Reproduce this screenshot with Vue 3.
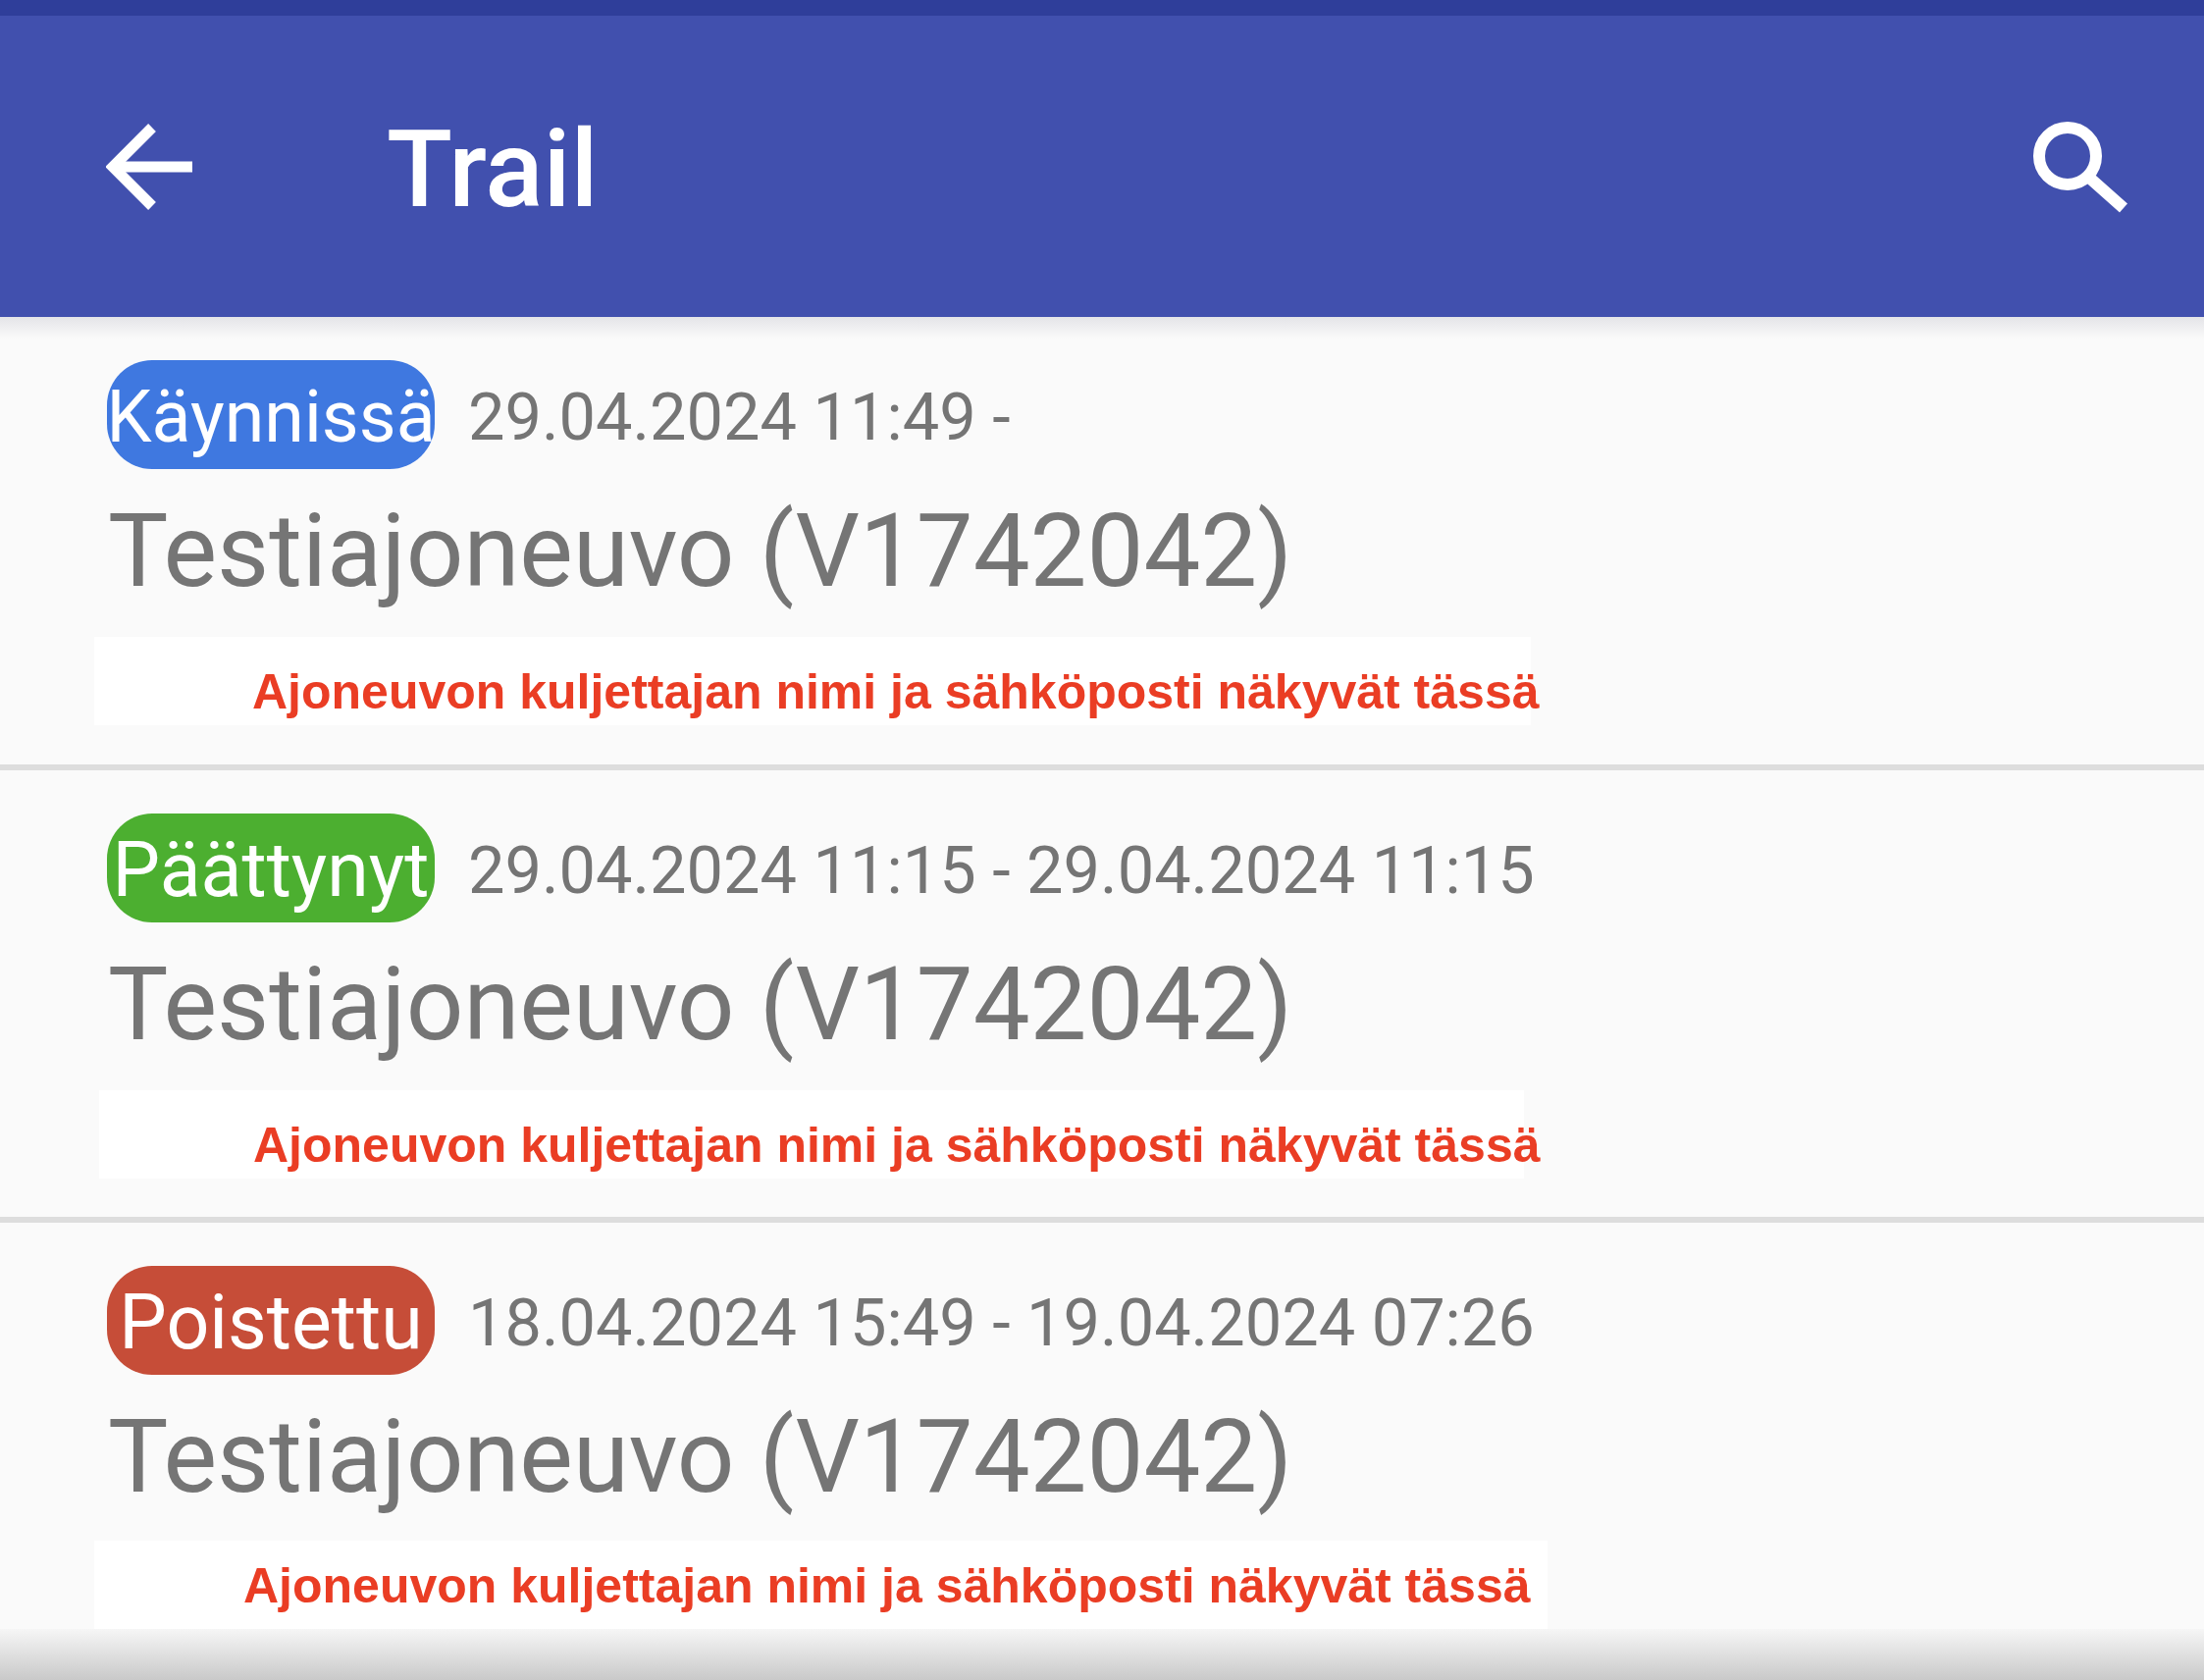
<script setup>
const trips = [
  { id: 1, status: 'Käynnissä', tone: 'running', time: '29.04.2024 11:49 -', patch: 'patch-a' },
  { id: 2, status: 'Päättynyt', tone: 'ended', time: '29.04.2024 11:15 - 29.04.2024 11:15', patch: 'patch-b' },
  { id: 3, status: 'Poistettu', tone: 'removed', time: '18.04.2024 15:49 - 19.04.2024 07:26', patch: 'patch-c' },
]
</script>

<template>
  <div class="page">
    <div class="status-bar"></div>
    <header class="toolbar">
      <svg class="back" width="88" height="88" viewBox="0 0 88 88" fill="none" stroke="#fff" stroke-width="11">
        <path d="M88 44H8" />
        <path d="M47 4 L7 44 L47 84" />
      </svg>
      <h1 class="title">Trail</h1>
      <svg class="search" width="100" height="100" viewBox="0 0 100 100" fill="none" stroke="#fff" stroke-width="12">
        <circle cx="39" cy="40" r="29" />
        <path d="M60 61 L96 93" />
      </svg>
    </header>
    <main class="list">
      <section v-for="trip in trips" :key="trip.id" class="trip">
        <div class="head">
          <span class="badge" :class="trip.tone"><span>{{ trip.status }}</span></span>
          <span class="time">{{ trip.time }}</span>
        </div>
        <div class="vehicle">Testiajoneuvo (V1742042)</div>
        <div class="patch" :class="trip.patch">Ajoneuvon kuljettajan nimi ja sähköposti näkyvät tässä</div>
      </section>
    </main>
    <div class="fade"></div>
  </div>
</template>

<style scoped>
.page {
  width: 2246px;
  height: 1712px;
  display: flex;
  flex-direction: column;
  overflow: hidden;
  background: #fafafa;
  font-family: Roboto, "Liberation Sans", sans-serif;
}

.status-bar {
  height: 16px;
  background: #2f3e9a;
}

.toolbar {
  height: 307px;
  flex: none;
  display: flex;
  align-items: center;
  padding: 0 78px 0 108px;
  box-sizing: border-box;
  background: #4150ae;
}

.back {
  flex: none;
  margin-top: 1px;
}

.title {
  margin: 6px 0 0 198px;
  flex: 1;
  color: #fff;
  font-size: 110px;
  font-weight: 500;
  line-height: 1;
}

.search {
  flex: none;
  margin-top: -2px;
}

.list {
  flex: none;
  background: linear-gradient(#e4e4e8, #fafafa 22px);
}

.trip {
  height: 456px;
  box-sizing: border-box;
  padding-top: 44px;
}

.trip + .trip {
  background: #fafafa;
  border-top: 6px solid #dddddd;
  height: 461px;
}

.trip:last-child {
  height: auto;
}

.head {
  display: flex;
  align-items: center;
  height: 111px;
  padding-left: 109px;
}

.badge {
  width: 334px;
  height: 111px;
  flex: none;
  display: flex;
  align-items: center;
  justify-content: center;
  padding-top: 4px;
  box-sizing: border-box;
  border-radius: 46px;
  color: #fff;
  white-space: nowrap;
}

.running { background: #3f78e0; font-size: 73.5px; }
.ended { background: #4caf30; font-size: 77px; }
.removed { background: #c64d38; font-size: 77px; }

.time {
  margin: 4px 0 0 34px;
  color: #757575;
  font-size: 66.7px;
  white-space: nowrap;
}

.vehicle {
  margin: 23px 0 0 110px;
  color: #757575;
  font-size: 103px;
  line-height: 122px;
  white-space: nowrap;
}

.patch {
  margin-top: 26px;
  height: 90px;
  display: flex;
  align-items: center;
  box-sizing: border-box;
  background: #fff;
  color: #ea3d24;
  font-family: "Liberation Sans", Arial, sans-serif;
  font-size: 50px;
  font-weight: 700;
  white-space: nowrap;
}

.patch-a { margin-left: 96px; width: 1464px; padding: 22px 0 0 161px; }
.patch-b { margin-left: 101px; width: 1452px; padding: 22px 0 0 157px; }
.patch-c { margin-left: 96px; width: 1481px; padding: 2px 0 0 152px; margin-top: 24px; }

.fade {
  flex: 1;
  background: linear-gradient(#f6f6f6, #c9c9c9);
}
</style>
